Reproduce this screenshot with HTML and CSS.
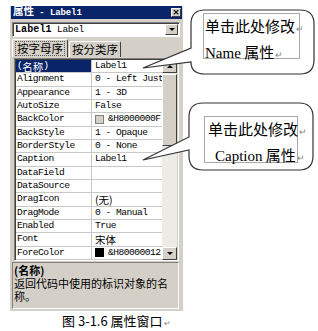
FILE: index.html
```html
<!DOCTYPE html>
<html>
<head>
<meta charset="utf-8">
<link rel="stylesheet" href="styles.css">
</head>
<body>
<div class="page">
  <div class="win">
    <div class="title">
      <span class="ttext"><span class="cj">属性</span> - Label1</span>
      <span class="close">×</span>
    </div>
    <div class="combo">
      <span class="cval"><b>Label1</b> Label</span>
      <span class="cbtn"><span class="tdown"></span></span>
    </div>
    <div class="tabs">
      <div class="tab active"><span class="focus">按字母序</span></div>
      <div class="tab">按分类序</div>
    </div>
    <div class="gridwrap">
      <div class="grid">
        <div class="row sel"><div class="n">(<span class="cj">名称</span>)</div><div class="v">Label1</div></div>
        <div class="row"><div class="n">Alignment</div><div class="v">0 - Left Justify</div></div>
        <div class="row"><div class="n">Appearance</div><div class="v">1 - 3D</div></div>
        <div class="row"><div class="n">AutoSize</div><div class="v">False</div></div>
        <div class="row"><div class="n">BackColor</div><div class="v"><span class="sw light"></span>&amp;H8000000F</div></div>
        <div class="row"><div class="n">BackStyle</div><div class="v">1 - Opaque</div></div>
        <div class="row"><div class="n">BorderStyle</div><div class="v">0 - None</div></div>
        <div class="row"><div class="n">Caption</div><div class="v">Label1</div></div>
        <div class="row"><div class="n">DataField</div><div class="v"></div></div>
        <div class="row"><div class="n">DataSource</div><div class="v"></div></div>
        <div class="row"><div class="n">DragIcon</div><div class="v"><span class="cj">(无)</span></div></div>
        <div class="row"><div class="n">DragMode</div><div class="v">0 - Manual</div></div>
        <div class="row"><div class="n">Enabled</div><div class="v">True</div></div>
        <div class="row"><div class="n">Font</div><div class="v"><span class="cj">宋体</span></div></div>
        <div class="row"><div class="n">ForeColor</div><div class="v"><span class="sw dark"></span>&amp;H80000012</div></div>
      </div>
      <div class="sb">
        <div class="sbtn"><span class="tup"></span></div>
        <div class="thumb"></div>
        <div class="track"></div>
        <div class="sbtn"><span class="tdown"></span></div>
      </div>
    </div>
    <div class="desc">
      <div class="dt">(名称)</div>
      <div class="dd">返回代码中使用的标识对象的名称。</div>
    </div>
  </div>
  <div class="fig">图 3-1.6 属性窗口<span class="ret">↵</span></div>

  <svg class="callouts" width="318" height="331" viewBox="0 0 318 331">
    <path d="M205 10 H300 Q314 10 314 24 V60 Q314 74 300 74 H205 Q191 74 191 62 L143 68 L191 48 V24 Q191 10 205 10 Z" />
    <path d="M203 103 H299 Q313 103 313 117 V156 Q313 170 299 170 H203 Q189 170 189 156 V150 L143 160 L189 137 V117 Q189 103 203 103 Z" />
  </svg>
  <div class="note n1">
    <div class="ln">单击此处修改<span class="ret">↵</span></div>
    <div class="ln"><span class="lat">Name</span> 属性<span class="ret">↵</span></div>
  </div>
  <div class="note n2">
    <div class="ln">单击此处修改<span class="ret">↵</span></div>
    <div class="ln indent"><span class="lat">Caption</span> 属性<span class="ret">↵</span></div>
  </div>
</div>
</body>
</html>
```

FILE: styles.css
```css
* { box-sizing: border-box; margin: 0; padding: 0; }
body {
  background: #fff;
  width: 318px;
  height: 331px;
  overflow: hidden;
  font-family: "Liberation Mono", "Noto Sans CJK SC", monospace;
}
.page {
  position: relative;
  width: 318px;
  height: 331px;
  padding-top: 6px;
}
.win {
  margin-left: 10px;
  width: 173px;
  background: #d4d0c8;
  padding: 0 1px 2px 1px;
}
.cj { font-family: "Noto Sans CJK SC", sans-serif; font-size: 10.5px; line-height: 11px; letter-spacing: 0; }

.title {
  height: 13px;
  background: #0a246a;
  display: flex;
  align-items: center;
  justify-content: space-between;
  padding: 0 1px 0 2px;
}
.ttext {
  color: #fff;
  font: bold 9px/13px "Liberation Mono", "Noto Sans CJK SC", monospace;
  letter-spacing: -0.1px;
  white-space: nowrap;
}
.close {
  width: 10px;
  height: 9px;
  background: #d4d0c8;
  border: 1px solid;
  border-color: #fff #404040 #404040 #fff;
  font: bold 9px/7px "DejaVu Sans", sans-serif;
  text-align: center;
  color: #000;
}

.combo {
  margin: 3px 2px 0 1px;
  height: 15px;
  background: #fff;
  border: 1px solid;
  border-color: #808080 #fff #fff #808080;
  box-shadow: inset 1px 1px 0 #404040;
  display: flex;
  align-items: center;
  padding: 0 1px 0 2px;
}
.cval { font-size: 9.5px; line-height: 12px; color: #000; white-space: nowrap; letter-spacing: -0.3px; }
.cval b { font-size: 10px; letter-spacing: 0.1px; }
.cbtn {
  margin-left: auto;
  width: 13px;
  height: 11px;
  background: #d4d0c8;
  border: 1px solid;
  border-color: #fff #404040 #404040 #fff;
  display: flex;
  align-items: center;
  justify-content: center;
}
.tdown {
  width: 0; height: 0;
  border-left: 3px solid transparent;
  border-right: 3px solid transparent;
  border-top: 3px solid #000;
}
.tup {
  width: 0; height: 0;
  border-left: 3px solid transparent;
  border-right: 3px solid transparent;
  border-bottom: 3px solid #000;
}

.tabs {
  display: flex;
  align-items: flex-end;
  margin: 2px 0 0 1px;
  height: 18px;
}
.tab {
  font: 11.5px/13px "Noto Sans CJK SC", sans-serif;
  white-space: nowrap;
  color: #000;
  height: 16px;
  padding: 0 2px;
  border: 1px solid;
  border-bottom: none;
  border-color: #fff #404040 transparent #fff;
  border-radius: 2px 2px 0 0;
  display: flex;
  align-items: center;
}
.tab.active { height: 18px; padding: 0 2px; margin-right: 1px; }
.focus { border: 1px dotted #555; padding: 0 1px; line-height: 13px; }

.gridwrap {
  display: flex;
  margin: 1px 3px 0 3px;
  height: 203px;
  border: 1px solid;
  border-color: #808080 #fff #fff #808080;
  box-shadow: inset 1px 1px 0 #404040;
  padding: 1px 0 0 1px;
}
.grid { width: 146px; display: flex; flex-direction: column; background: #fff; }
.row {
  display: flex;
  height: 13.4px;
  border-bottom: 1px solid #c8c8c8;
  font-size: 9.6px;
  letter-spacing: -0.5px;
  line-height: 12px;
  color: #000;
  overflow: hidden;
}
.n {
  width: 76px;
  padding-left: 1px;
  border-right: 1px solid #c8c8c8;
  white-space: nowrap;
  overflow: hidden;
  display: flex;
  align-items: center;
}
.v {
  width: 70px;
  padding-left: 3px;
  white-space: nowrap;
  overflow: hidden;
  display: flex;
  align-items: center;
}
.row.sel .n { background: #0a246a; color: #fff; }
.sw {
  width: 9px; height: 9px;
  border: 1px solid #000;
  margin-right: 4px;
  flex: none;
}
.sw.light { background: #d4d0c8; border-color: #808080; }
.sw.dark { background: #000; }

.sb {
  width: 15px;
  display: flex;
  flex-direction: column;
  background: #ecebe6;
}
.sbtn {
  height: 13px;
  background: #d4d0c8;
  border: 1px solid;
  border-color: #fff #404040 #404040 #fff;
  display: flex;
  align-items: center;
  justify-content: center;
}
.thumb {
  height: 72px;
  margin-top: 1px;
  background: #d4d0c8;
  border: 1px solid;
  border-color: #fff #404040 #404040 #fff;
}
.track { flex: 1; }

.desc {
  margin: 1px 3px 0 1px;
  height: 47px;
  border: 1px solid;
  border-color: #808080 #fff #fff #808080;
  padding: 1px 3px 0 1px;
  font: 11px/13px "Noto Sans CJK SC", sans-serif;
  color: #000;
}
.dt { font-weight: bold; }

.fig {
  margin: 1px 0 0 62px;
  font: 13px/17px "Noto Sans CJK SC", sans-serif;
  color: #000;
}
.ret { font-size: 8px; color: #888; margin-left: 1px; }

.callouts {
  position: absolute;
  left: 0; top: 0;
  fill: #fff;
  stroke: #333;
  stroke-width: 1.2;
}
.note {
  position: absolute;
  border: 1px solid #a8a8a8;
  background: #fff;
  font: 15px/23px "Noto Sans CJK SC", sans-serif;
  color: #000;
  padding-left: 1px;
}
.note .ret { font-size: 9px; }
.n1 { left: 203px; top: 13px; width: 97px; height: 46px; }
.n2 { left: 204px; top: 116px; width: 94px; height: 47px; padding-left: 3px; }
.ln { white-space: nowrap; }
.lat { font-family: "Liberation Serif", serif; font-size: 15px; }
.indent { padding-left: 7px; }
```
